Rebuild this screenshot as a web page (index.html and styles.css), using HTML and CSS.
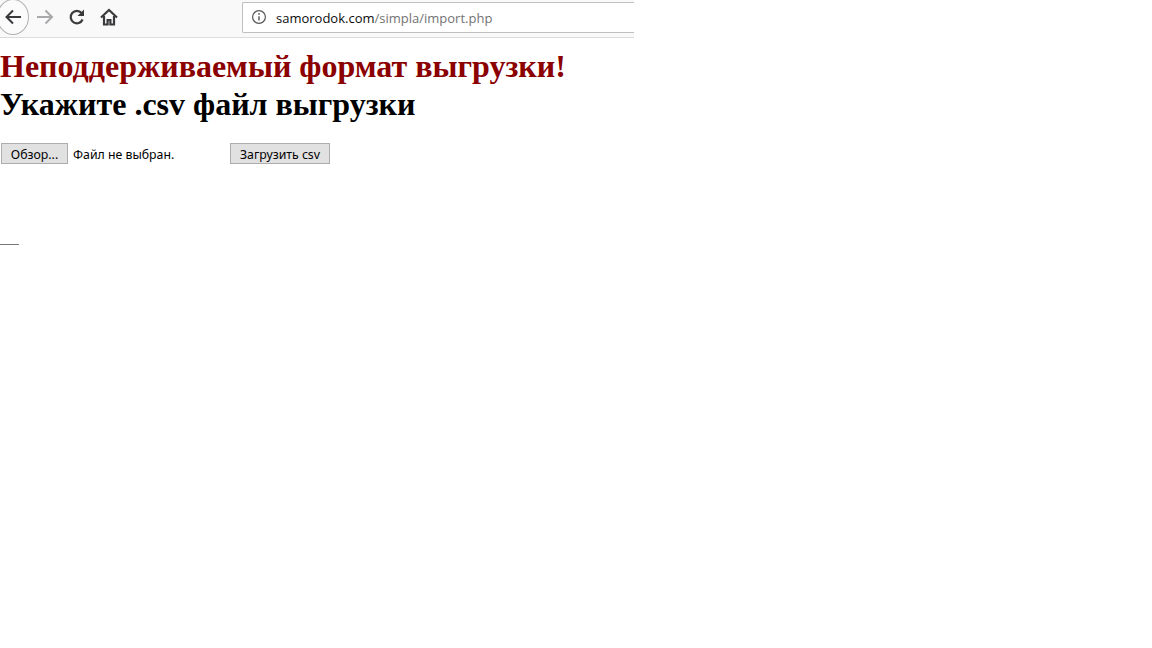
FILE: index.html
```html
<!DOCTYPE html>
<html lang="ru">
<head>
  <meta charset="UTF-8" />
  <meta name="viewport" content="width=device-width, initial-scale=1.0" />
  <title>Импорт</title>
  <link rel="stylesheet" href="styles.css">
</head>
<body>
  <div class="toolbar">
    <div class="nav-btn back">
      <svg width="18" height="18" viewBox="0 0 18 18"><path d="M17 9H2.5M9 2.5 2.5 9 9 15.5" fill="none" stroke="#3a3a3c" stroke-width="2"/></svg>
    </div>
    <div class="nav-btn forward">
      <svg width="18" height="18" viewBox="0 0 18 18"><path d="M1 9h15M9.5 2.5 16 9l-6.5 6.5" fill="none" stroke="#a9a9ab" stroke-width="2"/></svg>
    </div>
    <div class="nav-btn reload">
      <svg width="18" height="18" viewBox="0 0 18 18"><path d="M14.6 11.5A6.2 6.2 0 1 1 13.6 5" fill="none" stroke="#3a3a3c" stroke-width="2.2"/><path d="M16 1.5v6.5H9.5z" fill="#3a3a3c"/></svg>
    </div>
    <div class="nav-btn home">
      <svg width="18" height="18" viewBox="0 0 18 18"><path d="M1 9.5 9 2l8 7.5" fill="none" stroke="#3a3a3c" stroke-width="2.2"/><path d="M4 8v8.5h3.6v-4.5h2.8v4.5H14V8" fill="none" stroke="#3a3a3c" stroke-width="2.2"/></svg>
    </div>
    <div class="urlbar">
      <svg class="info" width="16" height="16" viewBox="0 0 16 16"><circle cx="8" cy="8" r="6.4" fill="none" stroke="#555" stroke-width="1.2"/><path d="M8 7.2v4.2" stroke="#555" stroke-width="1.4"/><circle cx="8" cy="4.9" r="0.9" fill="#555"/></svg>
      <span class="url"><span class="domain">samorodok.com</span>/simpla/import.php</span>
    </div>
  </div>

  <h1 class="error">Неподдерживаемый формат выгрузки!</h1>
  <h1 class="title">Укажите .csv файл выгрузки</h1>

  <form class="upload">
    <div class="file-btn">Обзор...</div>
    <span class="file-name">Файл не выбран.</span>
    <button type="button" class="submit">Загрузить csv</button>
  </form>

  <div class="dash"></div>
</body>
</html>
```

FILE: styles.css
```css
html, body {
  margin: 0;
  padding: 0;
  background: #fff;
}
body {
  width: 1152px;
  height: 648px;
  overflow: hidden;
  font-family: 'Liberation Serif', serif;
  color: #000;
}
.toolbar {
  width: 634px;
  height: 34px;
  padding-bottom: 3px;
  background: #f9f9fa;
  border-bottom: 1px solid #dcdcde;
  display: flex;
  align-items: center;
  overflow: hidden;
}
.nav-btn {
  width: 32px;
  height: 32px;
  display: flex;
  align-items: center;
  justify-content: center;
  flex-shrink: 0;
}
.back {
  width: 30px;
  height: 34px;
  margin-left: -3px;
  border: 1px solid #b1b1b3;
  border-radius: 50%;
  background: #fbfbfc;
}
.urlbar {
  width: 400px;
  height: 29px;
  margin-left: 117px;
  flex-shrink: 0;
  background: #fff;
  border: 1px solid #c0c0c2;
  border-right: none;
  border-radius: 2px 0 0 2px;
  display: flex;
  align-items: center;
  font-family: 'Open Sans', sans-serif;
  font-size: 13px;
  color: #737373;
}
.info {
  margin-left: 8px;
  margin-right: 9px;
}
.url {
  padding-top: 1px;
}
.domain {
  color: #0c0c0d;
}
.error, .title {
  margin: 0;
  font-size: 32px;
  line-height: 38px;
  font-weight: bold;
}
.error {
  margin-top: 9px;
  color: #8b0000;
}
.upload {
  margin-top: 20px;
  padding-left: 1px;
  display: flex;
  align-items: center;
  font-family: 'Noto Sans', sans-serif;
  font-size: 12.3px;
}
.file-btn, .submit {
  height: 21px;
  box-sizing: border-box;
  background: #e1e1e1;
  border: 1px solid #adadad;
  font-family: 'Noto Sans', sans-serif;
  font-size: 12.3px;
  color: #000;
  display: flex;
  align-items: center;
  justify-content: center;
  padding: 1px 0 0;
}
.file-btn {
  width: 67px;
}
.file-name {
  margin-left: 5px;
  padding-top: 1px;
  width: 157px;
}
.submit {
  width: 100px;
}
.dash {
  width: 19px;
  height: 1px;
  margin-top: 80px;
  background: #777;
}
```
